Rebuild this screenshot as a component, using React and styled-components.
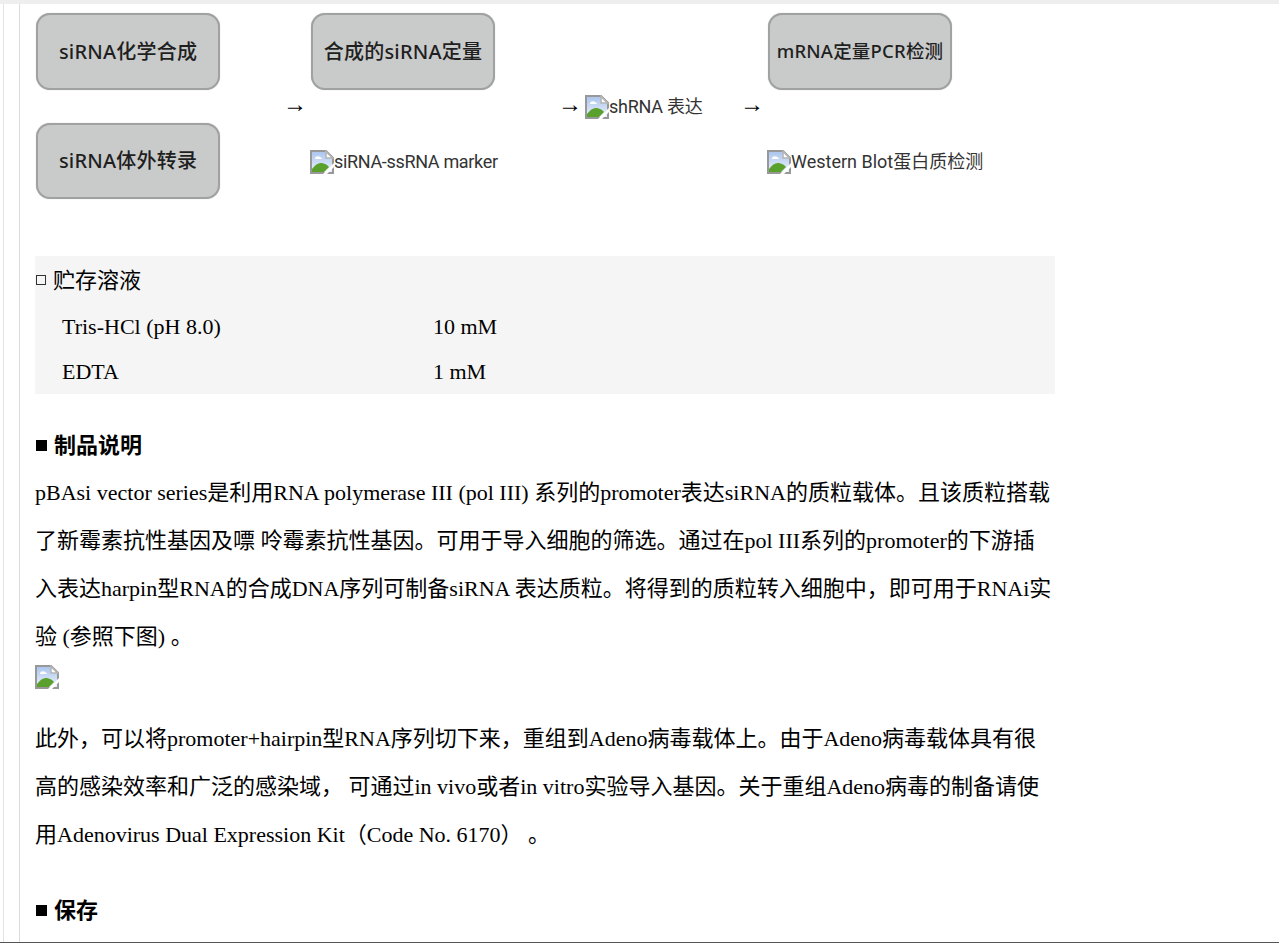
import React from "react";
import styled, { createGlobalStyle } from "styled-components";

const GlobalStyle = createGlobalStyle`
  html, body {
    margin: 0;
    padding: 0;
    background: #fff;
  }
  body {
    font-family: "Liberation Serif", "Noto Sans CJK SC", serif;
    color: #000;
  }
`;

const Page = styled.div`
  box-sizing: border-box;
  height: 943px;
  overflow: hidden;
  padding-left: 3px;
  border-top: 4px solid #eee;
  border-bottom: 1px solid #555;
`;

const Gutter = styled.div`
  height: 100%;
  padding-left: 15px;
  border-left: 1px solid #e3e3e3;
`;

const Article = styled.div`
  height: 100%;
  padding-left: 15px;
  border-left: 1px solid #dcdcdc;
`;

const Content = styled.div`
  width: 1020px;
`;

const Flow = styled.div`
  display: grid;
  grid-template-columns: 250px 25px 250px 25px 157px 25px 1fr;
  align-items: center;
  padding-top: 9px;
`;

const FlowColumn = styled.div`
  display: grid;
  grid-template-rows: 77px 76px;
  row-gap: 33px;
  align-items: center;
`;

const ProcessBox = styled.div`
  box-sizing: border-box;
  display: flex;
  align-items: center;
  justify-content: center;
  width: 184px;
  height: 100%;
  margin-left: 1px;
  padding-bottom: 3px;
  border: 2px solid #a0a2a1;
  border-radius: 14px;
  background: #c9cbca;
  box-shadow: 0 0 1px #b8b8b8;
  font-family: "Noto Sans", "Noto Sans CJK SC", sans-serif;
  font-size: ${({ $size }) => $size || 20}px;
  font-weight: 500;
  letter-spacing: 0.2px;
  color: #1f1f1f;
  white-space: nowrap;
`;

const Arrow = styled.div`
  margin: 0 0 4px -2px;
  font-family: "Liberation Serif", serif;
  font-size: 24px;
  line-height: 24px;
  color: #000;
`;

const Missing = styled.div`
  display: flex;
  align-items: center;
  padding-top: 2px;
  font-family: Roboto, "Noto Sans CJK SC", sans-serif;
  font-size: 18px;
  letter-spacing: ${({ $tracking }) => $tracking || 0}px;
  line-height: 24px;
  color: #333;
  white-space: nowrap;
`;

const BrokenIcon = () => (
  <svg width="24" height="24" viewBox="0 0 24 24" style={{ flex: "none", display: "block" }}>
    <defs>
      <linearGradient id="sky" x1="0" y1="0" x2="0" y2="1">
        <stop offset="0" stopColor="#a9c4ee" />
        <stop offset="1" stopColor="#eef3fc" />
      </linearGradient>
    </defs>
    <path d="M1 1H16L23 8V23H1Z" fill="url(#sky)" stroke="#989898" strokeWidth="2" />
    <path d="M16 1.500V8H22.500Z" fill="#fff" stroke="#b5b5b5" strokeWidth="1.5" />
    <path d="M5 8q1-2.500 4-1.500 2 0 2 1.500 1 0 1 1H5Z" fill="#fff" />
    <path d="M2 22V19q5-7 10-6 5 1 7 4l-5 5Z" fill="#5aa02c" />
    <path d="M13 24L24 13V17L17 24Z" fill="#fff" />
  </svg>
);

const Panel = styled.div`
  background: #f5f5f5;
  height: 138px;
  margin-top: 57px;
`;

const PanelTitle = styled.div`
  display: flex;
  align-items: center;
  height: 48px;
  padding-bottom: 5px;
  box-sizing: border-box;
  font-size: 22px;
`;

const Bullet = styled.span`
  display: inline-block;
  box-sizing: border-box;
  flex: none;
  width: ${({ $filled }) => ($filled ? 11 : 10)}px;
  height: ${({ $filled }) => ($filled ? 11 : 10)}px;
  margin: 5px 7px 0 1px;
  border: 1px solid ${({ $filled }) => ($filled ? "#000" : "#333")};
  background: ${({ $filled }) => ($filled ? "#000" : "transparent")};
`;

const Row = styled.div`
  display: grid;
  grid-template-columns: 371px 1fr;
  height: 45px;
  align-items: center;
  padding-left: 27px;
  font-size: 22px;
`;

const Heading = styled.h3`
  display: flex;
  align-items: center;
  margin: ${({ $top }) => $top}px 0 0;
  height: 32px;
  font-size: 22px;
  font-weight: 700;
`;

const Paragraph = styled.p`
  margin: ${({ $top }) => $top || 0}px 0 0;
  font-size: 22px;
  line-height: 48px;
`;

const Figure = styled.div`
  height: 26px;
  padding-top: 4px;
  margin-bottom: 24px;
`;

const FlowStack = ({ top, bottom, size, tracking, solid }) => (
  <FlowColumn>
    <ProcessBox $size={size}>{top}</ProcessBox>
    {solid ? (
      <ProcessBox>{bottom}</ProcessBox>
    ) : (
      <Missing $tracking={tracking}>
        <BrokenIcon />
        {bottom}
      </Missing>
    )}
  </FlowColumn>
);

export default function App() {
  return (
    <>
      <GlobalStyle />
      <Page>
        <Gutter>
          <Article>
            <Content>
              <Flow>
                <FlowStack top="siRNA化学合成" bottom="siRNA体外转录" solid />
                <Arrow>→</Arrow>
                <FlowStack top="合成的siRNA定量" bottom="siRNA-ssRNA marker" tracking={-0.33} />
                <Arrow>→</Arrow>
                <Missing $tracking={-0.25}>
                  <BrokenIcon />
                  shRNA 表达
                </Missing>
                <Arrow>→</Arrow>
                <FlowStack top="mRNA定量PCR检测" bottom="Western Blot蛋白质检测" size={18.5} />
              </Flow>

              <Panel>
                <PanelTitle>
                  <Bullet />
                  贮存溶液
                </PanelTitle>
                <Row>
                  <span>Tris-HCl (pH 8.0)</span>
                  <span>10 mM</span>
                </Row>
                <Row>
                  <span>EDTA</span>
                  <span>1 mM</span>
                </Row>
              </Panel>

              <Heading $top={33}>
                <Bullet $filled />
                制品说明
              </Heading>
              <Paragraph $top={10}>
                pBAsi vector series是利用RNA polymerase III (pol III) 系列的promoter表达siRNA的质粒载体。且该质粒搭载了新霉素抗性基因及嘌 呤霉素抗性基因。可用于导入细胞的筛选。通过在pol III系列的promoter的下游插入表达harpin型RNA的合成DNA序列可制备siRNA 表达质粒。将得到的质粒转入细胞中，即可用于RNAi实验 (参照下图) 。
              </Paragraph>
              <Figure>
                <BrokenIcon />
              </Figure>
              <Paragraph>
                此外，可以将promoter+hairpin型RNA序列切下来，重组到Adeno病毒载体上。由于Adeno病毒载体具有很高的感染效率和广泛的感染域， 可通过in vivo或者in vitro实验导入基因。关于重组Adeno病毒的制备请使用Adenovirus Dual Expression Kit（Code No. 6170） 。
              </Paragraph>
              <Heading $top={33}>
                <Bullet $filled />
                保存
              </Heading>
            </Content>
          </Article>
        </Gutter>
      </Page>
    </>
  );
}
